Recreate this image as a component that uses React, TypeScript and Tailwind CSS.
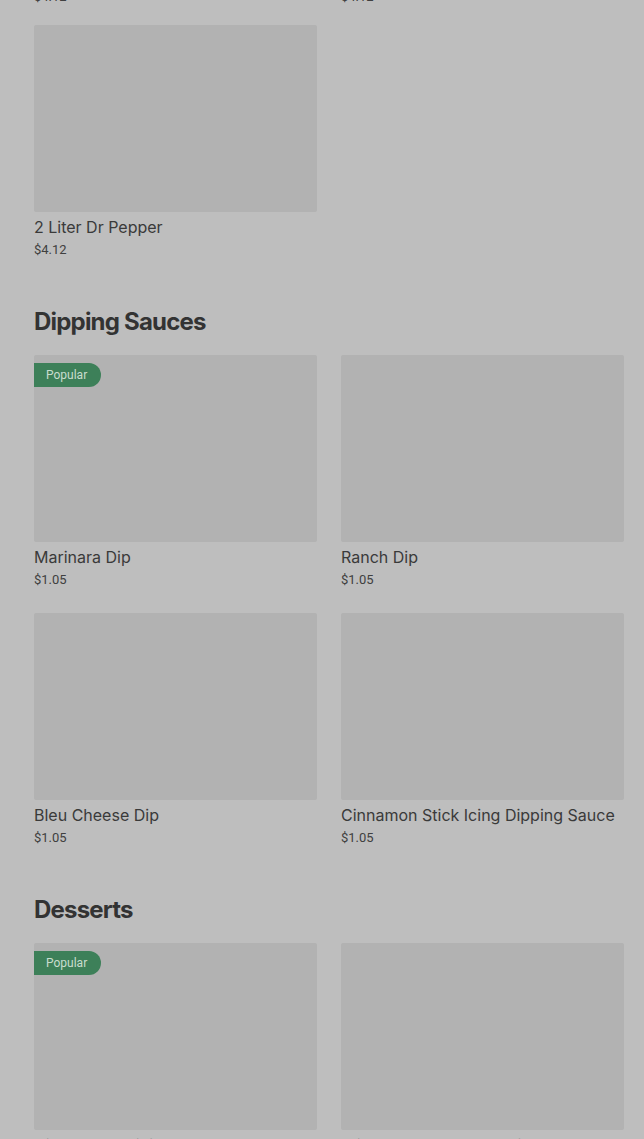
import React from "react";

type Item = { name: string; price: string; popular?: boolean };

const sections: { title: string; items: Item[] }[] = [
  {
    title: "Dipping Sauces",
    items: [
      { name: "Marinara Dip", price: "$1.05", popular: true },
      { name: "Ranch Dip", price: "$1.05" },
      { name: "Bleu Cheese Dip", price: "$1.05" },
      { name: "Cinnamon Stick Icing Dipping Sauce", price: "$1.05" },
    ],
  },
  {
    title: "Desserts",
    items: [
      { name: "Cinnabon® Mini Rolls", price: "$6.29", popular: true },
      { name: "Triple Chocolate Brownie", price: "$7.34" },
    ],
  },
];

function Card({ item }: { item: Item }) {
  return (
    <div className="flex flex-col">
      <div className="relative h-[187px] rounded-[2px] bg-[#b2b2b2]">
        {item.popular && (
          <span className="absolute left-0 top-[8px] flex h-[24px] items-center rounded-r-full bg-[#3d8059] pl-[12px] pr-[14px] text-[12px] text-[#c9ddcf]" style={{ fontFamily: "Roboto, sans-serif" }}>
            Popular
          </span>
        )}
      </div>
      <div className="mt-[3px] text-[16px] leading-[24px] text-[#3a3a3a]" style={{ fontFamily: "Inter, sans-serif" }}>
        {item.name}
      </div>
      <div className="text-[13px] leading-[22px] text-[#404040]" style={{ fontFamily: "Roboto, sans-serif" }}>
        {item.price}
      </div>
    </div>
  );
}

export default function App() {
  return (
    <div className="flex min-h-[1139px] flex-col overflow-hidden bg-[#bebebe] pl-[34px] pr-[20px]">
      <div className="-mt-[14px] mb-[17px] grid grid-cols-2 gap-x-[24px] text-[13px] leading-[22px] text-[#404040]" style={{ fontFamily: "Roboto, sans-serif" }}>
        <div>$4.12</div>
        <div>$4.12</div>
      </div>
      <div className="grid grid-cols-2 gap-x-[24px] gap-y-[22px]">
        <Card item={{ name: "2 Liter Dr Pepper", price: "$4.12" }} />
      </div>
      {sections.map((s) => (
        <section key={s.title} className="mt-[45px] flex flex-col">
          <h2 className="mb-[17px] text-[24px] font-bold leading-[32px] tracking-[-0.8px] text-[#333333]" style={{ fontFamily: "Inter, sans-serif" }}>
            {s.title}
          </h2>
          <div className="grid grid-cols-2 gap-x-[24px] gap-y-[22px]">
            {s.items.map((it) => (
              <Card key={it.name} item={it} />
            ))}
          </div>
        </section>
      ))}
    </div>
  );
}
